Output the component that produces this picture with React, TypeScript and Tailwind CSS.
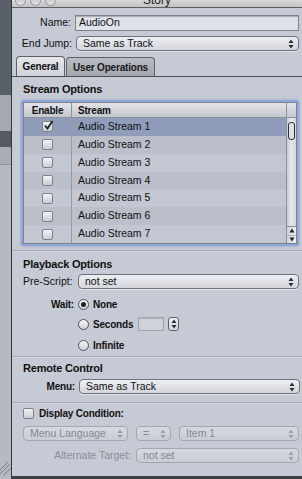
import React from "react";

const font = { fontFamily: '"Liberation Sans", Arial, sans-serif' };

function Arrows({ dim = false }: { dim?: boolean }) {
  const c = dim ? "#9a9ea6" : "#2a2c30";
  return (
    <svg width="6" height="10" viewBox="0 0 6 10" className="shrink-0">
      <path d="M3 0.5 L5.5 4 L0.5 4 Z" fill={c} />
      <path d="M3 9.5 L5.5 6 L0.5 6 Z" fill={c} />
    </svg>
  );
}

function Popup({ text, dim = false, className = "" }: { text: string; dim?: boolean; className?: string }) {
  return (
    <div
      className={
        "flex items-center justify-between rounded-[4px] border pl-[6px] pr-[4px] bg-gradient-to-b " +
        (dim
          ? "border-[#a3a7b0] from-[#d6d9df] to-[#c9ccd3] text-[#868a93] "
          : "border-[#6f737b] from-[#eceef2] to-[#d3d6dc] text-[#111] shadow-[0_1px_0_rgba(255,255,255,0.5)] ") +
        className
      }
    >
      <span className="text-[10.5px] leading-none">{text}</span>
      <Arrows dim={dim} />
    </div>
  );
}

function Check({ checked = false }: { checked?: boolean }) {
  return (
    <div className="relative w-[11px] h-[11px] rounded-[2px] border border-[#7d8189] bg-gradient-to-b from-[#f2f3f5] to-[#c9ccd2]">
      {checked && (
        <svg width="11" height="11" viewBox="0 0 11 11" className="absolute left-[0px] top-[-2px]">
          <path d="M2 5.5 L4.5 8.5 L9.5 1" stroke="#1c1e22" strokeWidth="1.8" fill="none" />
        </svg>
      )}
    </div>
  );
}

function Radio({ on = false }: { on?: boolean }) {
  return (
    <div className="flex items-center justify-center w-[11px] h-[11px] rounded-full border border-[#4e5258] bg-gradient-to-b from-[#f4f5f7] to-[#cfd2d8]">
      {on && <div className="w-[5px] h-[5px] rounded-full bg-[#1e2024]" />}
    </div>
  );
}

const rows = [1, 2, 3, 4, 5, 6, 7];

export default function App() {
  return (
    <div className="w-[302px] h-[479px] flex overflow-hidden bg-[#3c3f44] whitespace-nowrap" style={font}>
      {/* left strip: background window */}
      <div className="w-[11px] h-full flex flex-col shrink-0">
        <div className="h-[95px] bg-[#5a6067]" />
        <div className="h-[36px] bg-[#a5a8ad]" />
        <div className="h-[16px] bg-[#56595f]" />
        <div className="h-[18px] bg-[#a9acb1] border-b border-[#8e9196]" />
        <div className="relative flex-1 bg-[#b6b9bd]">
          <svg width="11" height="16" viewBox="0 0 11 16" className="absolute left-0 bottom-[3px]">
            <path d="M0 10 L8 2 M0 14 L10 4 M3 16 L11 8" stroke="#7c7f84" strokeWidth="1" />
          </svg>
        </div>
      </div>

      {/* window */}
      <div className="flex-1 h-[476px] flex flex-col border-l border-[#33363a] bg-[#c6cad4] overflow-hidden">
        {/* title bar */}
        <div className="relative h-[8px] shrink-0 bg-gradient-to-b from-[#d8d8d8] to-[#c2c2c2] border-b border-[#5d6066] overflow-hidden">
          <div className="absolute left-[3px] top-[-5px] flex gap-[4px]">
            {[0, 1, 2].map((i) => (
              <div key={i} className="w-[11px] h-[11px] rounded-full border border-[#8f9297] bg-gradient-to-b from-[#b8babd] to-[#e6e7e9]" />
            ))}
          </div>
          <div className="absolute left-0 right-0 top-[-6px] text-center text-[12px] leading-[12px] text-[#222]">Story</div>
        </div>

        {/* Name */}
        <div className="mt-[7px] h-[16px] flex items-center">
          <div className="w-[59px] text-right text-[10.5px] text-[#111]">Name:</div>
          <div className="ml-[4px] mr-[3px] flex-1 h-[16px] border border-[#7f838b] bg-[#dfe2e9] shadow-[inset_0_1px_1px_rgba(0,0,0,0.25)] flex items-center pl-[3px] text-[10.5px] text-[#111]">
            AudioOn
          </div>
        </div>

        {/* End Jump */}
        <div className="mt-[5px] h-[15px] flex items-center">
          <div className="w-[60px] text-right text-[10.5px] text-[#111]">End Jump:</div>
          <Popup text="Same as Track" className="ml-[4px] mr-[3px] flex-1 h-[15px]" />
        </div>

        {/* Tabs */}
        <div className="mt-[6px] h-[20px] flex items-end border-b border-[#4a4d52] pl-[4px]">
          <div className="w-[49px] h-[20px] rounded-t-[4px] border border-b-0 border-[#5f6369] bg-gradient-to-b from-[#e4e6ea] to-[#d0d3da] flex items-center justify-center text-[10px] tracking-[-0.2px] font-bold text-[#111]">
            General
          </div>
          <div className="ml-[1px] w-[89px] h-[19px] rounded-t-[4px] border border-b-0 border-[#5f6369] bg-gradient-to-b from-[#b9bcc3] to-[#a2a6ae] flex items-center justify-center text-[10px] tracking-[-0.2px] font-bold text-[#1a1a1a]">
            User Operations
          </div>
        </div>

        {/* tab content */}
        <div className="flex flex-col">
          <div className="mt-[3px] h-[18px] pl-[11px] flex items-center text-[11px] tracking-[-0.2px] font-bold text-[#111]">Stream Options</div>

          {/* table */}
          <div className="mt-[2px] ml-[9px] mr-[3px] h-[146px] rounded-[3px] p-[2px] bg-[#8fa6d8] shadow-[0_0_2px_rgba(90,120,200,0.7)]">
            <div className="h-full flex bg-[#bcc0ca] border border-[#7e828a]">
              <div className="flex-1 flex flex-col">
                <div className="h-[15px] flex border-b border-[#8d9199] bg-gradient-to-b from-[#e2e4e9] to-[#c4c7ce] text-[10px] tracking-[-0.2px] font-bold text-[#111]">
                  <div className="w-[48px] flex items-center justify-center border-r border-[#8d9199]">Enable</div>
                  <div className="flex-1 flex items-center pl-[6px]">Stream</div>
                </div>
                {rows.map((n) => (
                  <div
                    key={n}
                    className={
                      "h-[18px] flex " +
                      (n === 1 ? "bg-[#8f9dbb]" : n % 2 === 0 ? "bg-[#bbbfca]" : "bg-[#c3c7d1]")
                    }
                  >
                    <div className="w-[48px] flex items-center justify-center border-r border-[#959aa4]">
                      <Check checked={n === 1} />
                    </div>
                    <div className="flex-1 flex items-center pl-[6px] text-[10.5px] text-[#111]">Audio Stream {n}</div>
                  </div>
                ))}
              </div>
              {/* scrollbar */}
              <div className="w-[10px] flex flex-col border-l border-[#8d9199]">
                <div className="h-[15px] border-b border-[#8d9199] bg-gradient-to-b from-[#e2e4e9] to-[#c4c7ce]" />
                <div className="flex-1 relative bg-gradient-to-r from-[#c9ccd2] via-[#e6e8ec] to-[#d2d5da]">
                  <div className="absolute left-[1px] top-[4px] w-[7px] h-[18px] rounded-[3px] border-[1.5px] border-[#2c2e33] bg-[#dfe1e5]" />
                </div>
                <div className="h-[17px] flex flex-col bg-gradient-to-r from-[#d0d3d8] to-[#eceef0] border-t border-[#8d9199]">
                  <div className="flex-1 flex items-center justify-center">
                    <svg width="6" height="5" viewBox="0 0 6 5"><path d="M3 0.5 L5.5 4.5 L0.5 4.5 Z" fill="#222" /></svg>
                  </div>
                  <div className="flex-1 flex items-center justify-center border-t border-[#b0b3b9]">
                    <svg width="6" height="5" viewBox="0 0 6 5"><path d="M3 4.5 L5.5 0.5 L0.5 0.5 Z" fill="#222" /></svg>
                  </div>
                </div>
              </div>
            </div>
          </div>

          <div className="mt-[4px] h-[1px] bg-[#a3a7b0] border-b border-[#d8dbe2] box-content" />

          {/* Playback Options */}
          <div className="mt-[3px] h-[18px] pl-[11px] flex items-center text-[11px] tracking-[-0.2px] font-bold text-[#111]">Playback Options</div>
          <div className="mt-[1px] h-[15px] flex items-center pl-[11px]">
            <div className="w-[52px] text-[10.5px] text-[#111]">Pre-Script:</div>
            <Popup text="not set" className="ml-[3px] mr-[3px] flex-1 h-[15px]" />
          </div>
          <div className="mt-[6px] h-[18px] flex items-center pl-[11px]">
            <div className="w-[51px] text-right text-[10px] tracking-[-0.2px] font-bold text-[#111]">Wait:</div>
            <div className="ml-[4px]"><Radio on /></div>
            <div className="ml-[4px] text-[10px] tracking-[-0.2px] font-bold text-[#111]">None</div>
          </div>
          <div className="mt-[2px] h-[18px] flex items-center pl-[66px]">
            <Radio />
            <div className="ml-[4px] text-[10px] tracking-[-0.2px] font-bold text-[#111]">Seconds</div>
            <div className="ml-[5px] w-[26px] h-[14px] border border-[#a0a4ac] bg-[#cfd2d9] shadow-[inset_0_1px_1px_rgba(0,0,0,0.15)]" />
            <div className="ml-[4px] w-[11px] h-[14px] rounded-[3px] border border-[#5e6268] bg-gradient-to-b from-[#eef0f2] to-[#d3d6db] flex items-center justify-center">
              <Arrows />
            </div>
          </div>
          <div className="mt-[3px] h-[18px] flex items-center pl-[66px]">
            <Radio />
            <div className="ml-[4px] text-[10px] tracking-[-0.2px] font-bold text-[#111]">Infinite</div>
          </div>

          <div className="mt-[2px] h-[1px] bg-[#a3a7b0] border-b border-[#d8dbe2] box-content" />

          {/* Remote Control */}
          <div className="mt-[1px] h-[18px] pl-[11px] flex items-center text-[11px] tracking-[-0.2px] font-bold text-[#111]">Remote Control</div>
          <div className="mt-[2px] h-[15px] flex items-center pl-[11px]">
            <div className="w-[52px] text-right text-[10px] tracking-[-0.2px] font-bold text-[#111]">Menu:</div>
            <Popup text="Same as Track" className="ml-[4px] mr-[2px] flex-1 h-[15px]" />
          </div>

          <div className="mt-[8px] h-[1px] bg-[#a3a7b0] border-b border-[#d8dbe2] box-content" />

          {/* Display condition */}
          <div className="mt-[0px] h-[18px] flex items-center pl-[11px]">
            <Check />
            <div className="ml-[5px] text-[10px] tracking-[-0.2px] font-bold text-[#111]">Display Condition:</div>
          </div>
          <div className="mt-[4px] h-[15px] flex items-center pl-[11px] gap-[8px] pr-[3px]">
            <Popup text="Menu Language" dim className="w-[105px] h-[15px]" />
            <Popup text="=" dim className="w-[35px] h-[15px]" />
            <Popup text="Item 1" dim className="flex-1 h-[15px]" />
          </div>
          <div className="mt-[7px] h-[15px] flex items-center pr-[3px]">
            <div className="w-[119px] text-right text-[10.5px] text-[#8a8e97]">Alternate Target:</div>
            <Popup text="not set" dim className="ml-[5px] flex-1 h-[15px]" />
          </div>
        </div>
      </div>
    </div>
  );
}
